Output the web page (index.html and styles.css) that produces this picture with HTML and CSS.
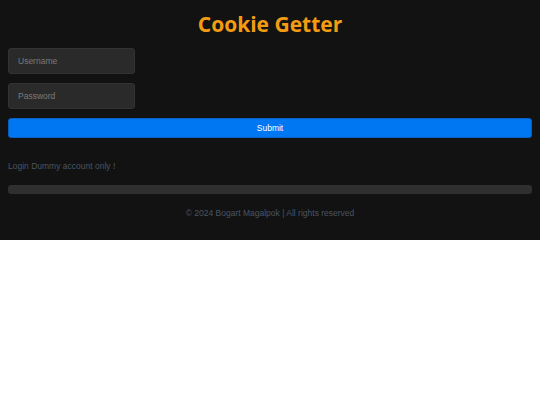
FILE: index.html
```html
<!DOCTYPE html>
<html>
<head>
<meta charset="utf-8">
<link rel="stylesheet" href="styles.css">
</head>
<body>
<div class="app">
  <h1 class="title">Cookie Getter</h1>
  <form class="login">
    <input class="field" type="text" placeholder="Username">
    <input class="field" type="password" placeholder="Password">
    <button class="submit" type="button">Submit</button>
  </form>
  <p class="note">Login Dummy account only !</p>
  <div class="bar"></div>
  <footer class="footer">© 2024 Bogart Magalpok | All rights reserved</footer>
</div>
</body>
</html>
```
FILE: styles.css
```css
html, body {
  margin: 0;
  padding: 0;
  background: #ffffff;
}
.app {
  background: #121212;
  padding: 8px 8px 0 8px;
  height: 232px;
  display: flex;
  flex-direction: column;
  font-family: "Liberation Sans", Arial, sans-serif;
}
.title {
  margin: 0 0 8px 0;
  height: 32px;
  line-height: 32px;
  text-align: center;
  font-family: "Open Sans", sans-serif;
  font-weight: 700;
  font-size: 21px;
  color: #f39c12;
}
.login {
  display: flex;
  flex-direction: column;
  align-items: flex-start;
  margin: 0;
}
.field {
  box-sizing: border-box;
  width: 127px;
  height: 26px;
  margin: 0 0 9px 0;
  padding: 0 9px;
  background: #2a2a2a;
  border: 1px solid #333333;
  border-radius: 3px;
  color: #cccccc;
  font-family: "Liberation Sans", Arial, sans-serif;
  font-size: 8.5px;
  outline: none;
}
.field::placeholder {
  color: #7a7a7a;
}
.submit {
  box-sizing: border-box;
  width: 100%;
  height: 20px;
  margin: 0;
  padding: 0;
  background: #0077f2;
  border: 1px solid #0a5fc0;
  border-radius: 3px;
  color: #ffffff;
  font-family: "Liberation Sans", Arial, sans-serif;
  font-size: 8.5px;
}
.note {
  margin: 23px 0 0 0;
  height: 10px;
  line-height: 10px;
  font-size: 8.5px;
  color: #4a5563;
}
.bar {
  margin-top: 14px;
  height: 9px;
  background: #2f2f2f;
  border-radius: 3px;
}
.footer {
  margin-top: 14px;
  height: 10px;
  line-height: 10px;
  text-align: center;
  font-size: 8.5px;
  color: #4a5563;
}
```
